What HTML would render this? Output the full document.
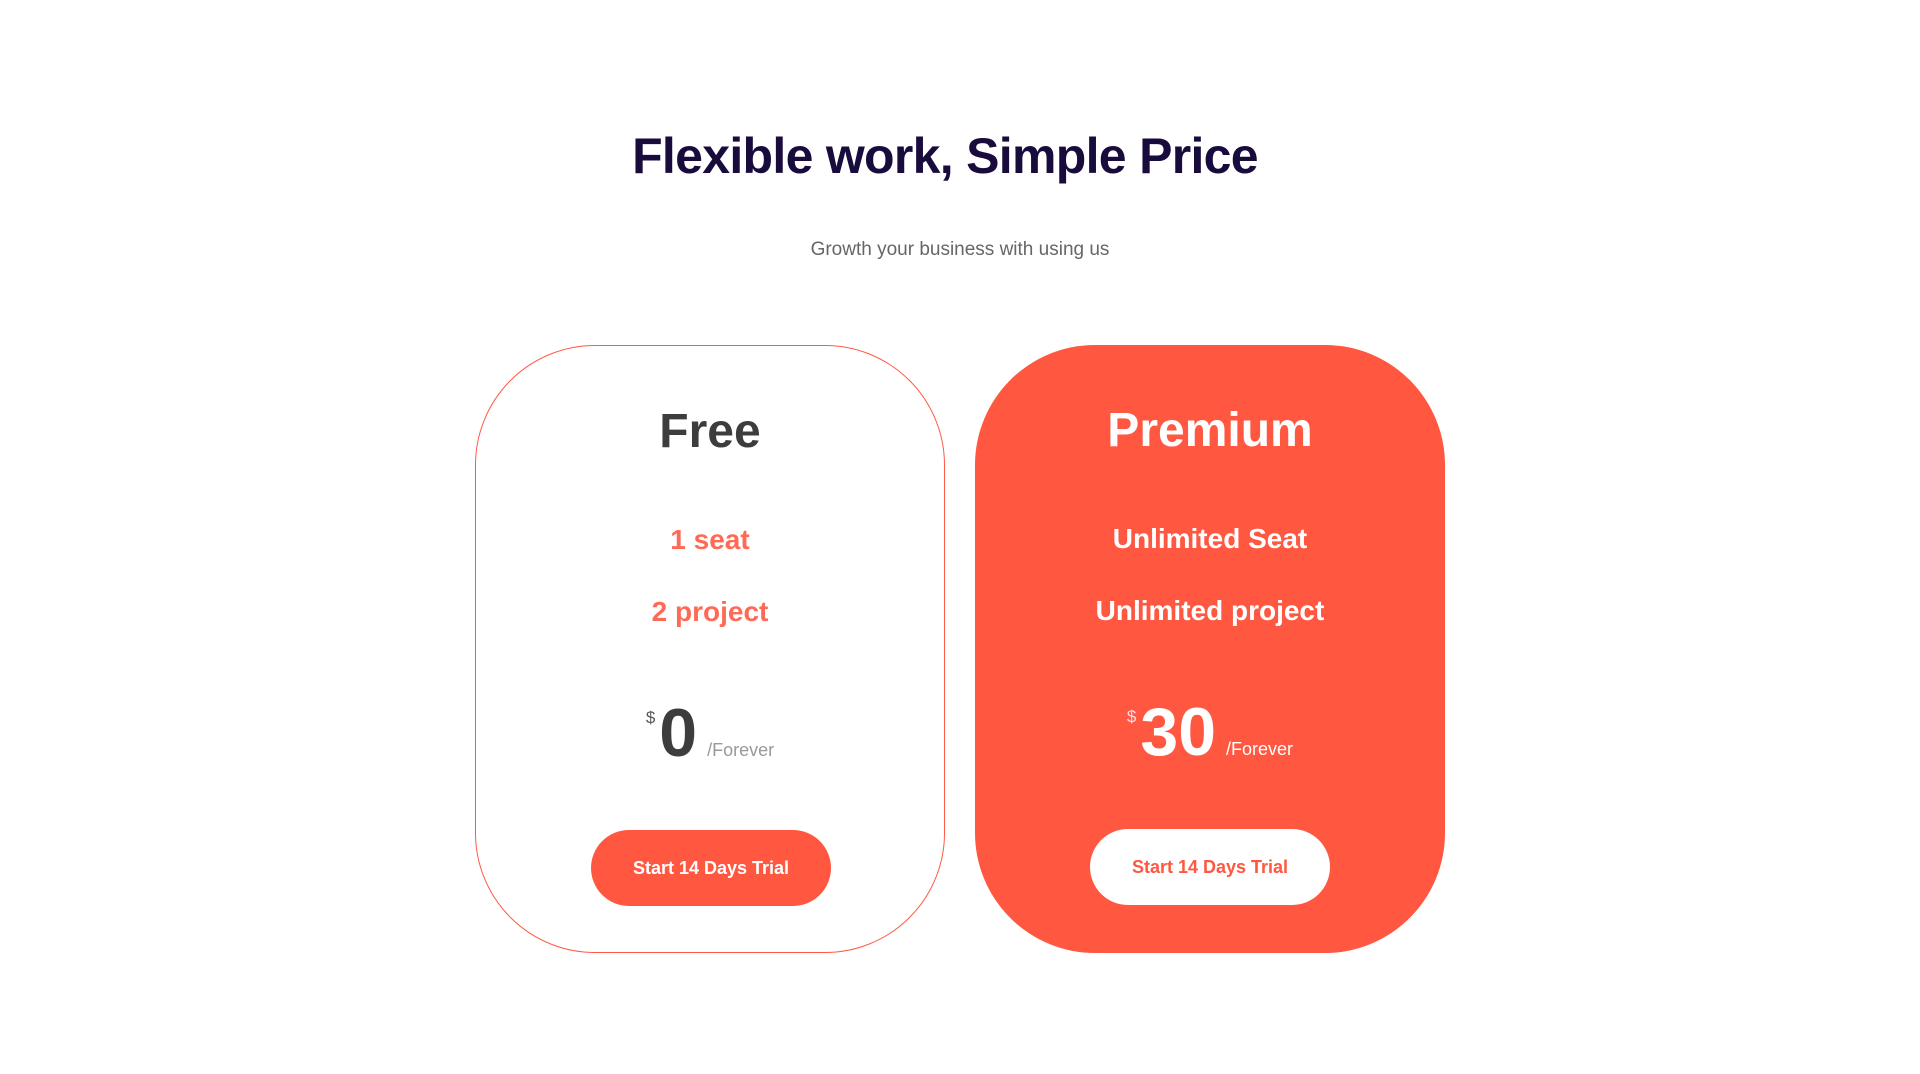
<!DOCTYPE html>
<html><head><style>
*{margin:0;padding:0;box-sizing:border-box}
body{width:1920px;height:1074px;background:#fff;font-family:"Liberation Sans",sans-serif;position:relative;overflow:hidden}
h1{position:absolute;top:127px;left:0;width:1920px;text-align:center;font-size:50px;font-weight:700;color:#1a0b3d;letter-spacing:-0.7px;padding-right:30px}
.sub{position:absolute;top:239px;left:0;width:1920px;text-align:center;font-size:19px;color:#666}
.card{position:absolute;top:345px;width:470px;height:608px;border-radius:120px;text-align:center}
.c1{left:475px;border:1.5px solid #ff5a44;background:#fff}
.c2{left:975px;background:#ff5740}
.t{position:absolute;top:58px;width:100%;font-size:48px;font-weight:700}
.f{position:absolute;width:100%;font-size:28px;font-weight:700}
.price{position:absolute;top:348px;width:100%;text-align:center;white-space:nowrap}
.price .d{font-size:17px;vertical-align:top;position:relative;top:14px}
.price .n{font-size:68px;font-weight:700;margin:0 10px 0 4px}
.price .p{font-size:18px}
.btn{position:absolute;top:484px;left:115px;width:240px;height:76px;border-radius:38px;font-size:18px;font-weight:700;line-height:76px}
</style></head><body>
<h1>Flexible work, Simple Price</h1>
<div class="sub">Growth your business with using us</div>
<div class="card c1">
 <div class="t" style="color:#3d3d3d">Free</div>
 <div class="f" style="top:178px;color:#ff6a57">1 seat</div>
 <div class="f" style="top:250px;color:#ff6a57">2 project</div>
 <div class="price"><span class="d" style="color:#555">$</span><span class="n" style="color:#3d3d3d">0</span><span class="p" style="color:#999">/Forever</span></div>
 <div class="btn" style="background:#ff5740;color:#fff">Start 14 Days Trial</div>
</div>
<div class="card c2">
 <div class="t" style="color:#fff">Premium</div>
 <div class="f" style="top:178px;color:#fff">Unlimited Seat</div>
 <div class="f" style="top:250px;color:#fff">Unlimited project</div>
 <div class="price"><span class="d" style="color:#fde">$</span><span class="n" style="color:#fff">30</span><span class="p" style="color:#fff">/Forever</span></div>
 <div class="btn" style="background:#fff;color:#ff5740">Start 14 Days Trial</div>
</div>
</body></html>
